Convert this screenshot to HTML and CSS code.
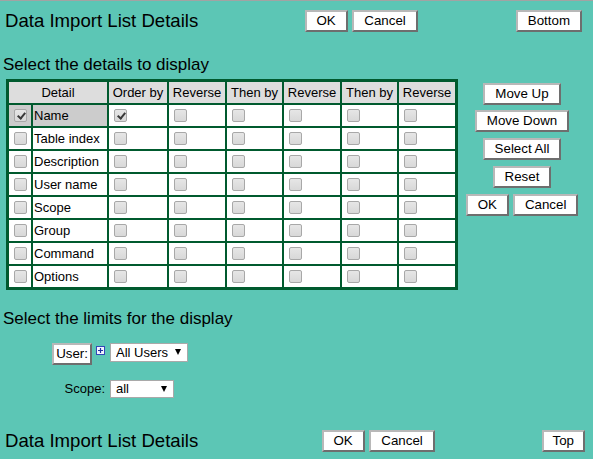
FILE: index.html
```html
<!DOCTYPE html>
<html>
<head>
<meta charset="utf-8">
<title>Data Import List Details</title>
<link rel="stylesheet" href="styles.css">
</head>
<body>
<div class="bar bar-top">
  <div class="title title-top">Data Import List Details</div>
  <button class="btn">OK</button>
  <button class="btn">Cancel</button>
  <button class="btn push">Bottom</button>
</div>

<div class="heading heading-details">Select the details to display</div>

<div class="main">
  <table class="grid">
    <colgroup>
      <col class="c-chk"><col class="c-name"><col class="c-ord"><col class="c-rev"><col class="c-then"><col class="c-rev"><col class="c-then"><col class="c-rev">
    </colgroup>
    <thead>
      <tr>
        <th colspan="2">Detail</th>
        <th>Order by</th>
        <th>Reverse</th>
        <th>Then by</th>
        <th>Reverse</th>
        <th>Then by</th>
        <th>Reverse</th>
      </tr>
    </thead>
    <tbody>
      <tr class="row-selected">
        <td class="hl"><input type="checkbox" class="cb" checked></td>
        <td class="hl txt">Name</td>
        <td><input type="checkbox" class="cb" checked></td>
        <td><input type="checkbox" class="cb"></td>
        <td><input type="checkbox" class="cb"></td>
        <td><input type="checkbox" class="cb"></td>
        <td><input type="checkbox" class="cb"></td>
        <td><input type="checkbox" class="cb"></td>
      </tr>
      <tr>
        <td><input type="checkbox" class="cb"></td>
        <td class="txt">Table index</td>
        <td><input type="checkbox" class="cb"></td>
        <td><input type="checkbox" class="cb"></td>
        <td><input type="checkbox" class="cb"></td>
        <td><input type="checkbox" class="cb"></td>
        <td><input type="checkbox" class="cb"></td>
        <td><input type="checkbox" class="cb"></td>
      </tr>
      <tr>
        <td><input type="checkbox" class="cb"></td>
        <td class="txt">Description</td>
        <td><input type="checkbox" class="cb"></td>
        <td><input type="checkbox" class="cb"></td>
        <td><input type="checkbox" class="cb"></td>
        <td><input type="checkbox" class="cb"></td>
        <td><input type="checkbox" class="cb"></td>
        <td><input type="checkbox" class="cb"></td>
      </tr>
      <tr>
        <td><input type="checkbox" class="cb"></td>
        <td class="txt">User name</td>
        <td><input type="checkbox" class="cb"></td>
        <td><input type="checkbox" class="cb"></td>
        <td><input type="checkbox" class="cb"></td>
        <td><input type="checkbox" class="cb"></td>
        <td><input type="checkbox" class="cb"></td>
        <td><input type="checkbox" class="cb"></td>
      </tr>
      <tr>
        <td><input type="checkbox" class="cb"></td>
        <td class="txt">Scope</td>
        <td><input type="checkbox" class="cb"></td>
        <td><input type="checkbox" class="cb"></td>
        <td><input type="checkbox" class="cb"></td>
        <td><input type="checkbox" class="cb"></td>
        <td><input type="checkbox" class="cb"></td>
        <td><input type="checkbox" class="cb"></td>
      </tr>
      <tr>
        <td><input type="checkbox" class="cb"></td>
        <td class="txt">Group</td>
        <td><input type="checkbox" class="cb"></td>
        <td><input type="checkbox" class="cb"></td>
        <td><input type="checkbox" class="cb"></td>
        <td><input type="checkbox" class="cb"></td>
        <td><input type="checkbox" class="cb"></td>
        <td><input type="checkbox" class="cb"></td>
      </tr>
      <tr>
        <td><input type="checkbox" class="cb"></td>
        <td class="txt">Command</td>
        <td><input type="checkbox" class="cb"></td>
        <td><input type="checkbox" class="cb"></td>
        <td><input type="checkbox" class="cb"></td>
        <td><input type="checkbox" class="cb"></td>
        <td><input type="checkbox" class="cb"></td>
        <td><input type="checkbox" class="cb"></td>
      </tr>
      <tr>
        <td><input type="checkbox" class="cb"></td>
        <td class="txt">Options</td>
        <td><input type="checkbox" class="cb"></td>
        <td><input type="checkbox" class="cb"></td>
        <td><input type="checkbox" class="cb"></td>
        <td><input type="checkbox" class="cb"></td>
        <td><input type="checkbox" class="cb"></td>
        <td><input type="checkbox" class="cb"></td>
      </tr>
    </tbody>
  </table>

  <div class="side">
    <button class="btn">Move Up</button>
    <button class="btn">Move Down</button>
    <button class="btn">Select All</button>
    <button class="btn">Reset</button>
    <div class="pair">
      <button class="btn">OK</button>
      <button class="btn">Cancel</button>
    </div>
  </div>
</div>

<div class="heading heading-limits">Select the limits for the display</div>

<div class="limits">
  <div class="lcell lcell-user">
    <button class="btn btn-user">User:</button>
    <svg class="plus" width="9" height="9" viewBox="0 0 9 9" aria-hidden="true">
      <rect x="0.5" y="0.5" width="8" height="8" fill="#f4f5ff" stroke="#3346b8" stroke-width="1"/>
      <path d="M2 4.5H7M4.5 2V7" stroke="#1f30a0" stroke-width="1.2" fill="none"/>
    </svg>
  </div>
  <div class="rcell">
    <span class="ddwrap"><select class="dd dd-users"><option>All Users</option></select></span>
  </div>
  <div class="lcell lcell-scope">
    <span class="lbl">Scope:</span>
  </div>
  <div class="rcell rcell-scope">
    <span class="ddwrap"><select class="dd dd-scope"><option>all</option></select></span>
  </div>
</div>

<div class="bar bar-bottom">
  <div class="title title-bottom">Data Import List Details</div>
  <button class="btn">OK</button>
  <button class="btn">Cancel</button>
  <button class="btn push btn-top">Top</button>
</div>
</body>
</html>
```

FILE: styles.css
```css
html, body {
  margin: 0;
  padding: 0;
}
body {
  background: #5cc6b5;
  border-top: 1px solid #a3a3a3;
  font-family: "Liberation Sans", Arial, sans-serif;
  color: #000;
  height: 458px;
  overflow: hidden;
}

/* top and bottom bars */
.bar {
  display: flex;
  align-items: center;
  gap: 4.5px;
}
.bar-top {
  margin-top: 9px;
  padding-right: 11px;
}
.bar-bottom {
  margin-top: 32px;
  padding-right: 8px;
}
.title {
  font-size: 18.6px;
  line-height: 22px;
  margin-left: 5px;
  flex: none;
}
.title-top { width: 295px; }
.title-bottom { width: 312px; }

/* buttons */
.btn {
  font-family: "Liberation Sans", Arial, sans-serif;
  font-size: 13.33px;
  line-height: 16px;
  height: 22px;
  padding: 1px 10px;
  margin: 0;
  background: #fff;
  color: #000;
  border: 2px solid;
  border-color: #b8b8b8 #6e6e6e #6e6e6e #b8b8b8;
  border-radius: 0;
  flex: none;
}
.btn.push { margin-left: auto; }
.btn.btn-top { padding: 1px 9px; }
.btn.btn-user { padding: 1px 2px; }

/* headings */
.heading {
  font-size: 17px;
  line-height: 20px;
  margin-left: 3px;
}
.heading-details {
  margin-top: 23.3px;
  margin-bottom: 3.7px;
}
.heading-limits {
  margin-top: 18.8px;
}

/* main area */
.main {
  display: flex;
  align-items: flex-start;
}
.grid {
  margin-left: 6px;
  width: 452px;
  table-layout: fixed;
  border-collapse: separate;
  border-spacing: 2px;
  border: 1px solid #005a2e;
  background: #005a2e;
  font-size: 13px;
}
.c-chk { width: 22px; }
.c-name { width: 74px; }
.c-ord { width: 58px; }
.c-rev { width: 56px; }
.c-then { width: 55px; }

.grid tr { height: 21px; }
.grid th,
.grid td {
  padding: 0;
  height: 21px;
  vertical-align: middle;
  white-space: nowrap;
}
.grid th {
  background: #dddddd;
  font-weight: normal;
  text-align: center;
}
.grid td {
  background: #fff;
  text-align: left;
}
.grid td.hl {
  background: #cccccc;
}
.grid td.txt {
  text-indent: 1px;
}

/* checkboxes */
.cb {
  -webkit-appearance: none;
  appearance: none;
  display: block;
  position: relative;
  width: 13px;
  height: 13px;
  margin: 0 0 0 5px;
  border: 1px solid #a8a8a8;
  border-radius: 2px;
  background: linear-gradient(#e6e6e6, #d8d8d8);
  box-sizing: border-box;
}
.cb:checked::after {
  content: "";
  position: absolute;
  left: 3.5px;
  top: 1px;
  width: 3px;
  height: 6px;
  border-right: 2px solid #3a3a3a;
  border-bottom: 2px solid #3a3a3a;
  transform: rotate(40deg);
}

/* side buttons */
.side {
  width: 112px;
  margin-left: 8px;
  padding-top: 3.7px;
  display: flex;
  flex-direction: column;
  align-items: center;
  gap: 5.8px;
}
.pair {
  display: flex;
  gap: 4px;
}

/* limits */
.limits {
  margin-top: 14.5px;
  display: grid;
  grid-template-columns: 105px auto;
  column-gap: 5px;
  row-gap: 14.3px;
  justify-content: start;
}
.lcell {
  display: flex;
  justify-content: flex-end;
}
.lcell-user {
  align-items: flex-start;
  gap: 4px;
}
.plus {
  display: block;
  margin-top: 3px;
}
.lcell-scope,
.rcell-scope {
  align-items: center;
  display: flex;
}
.lbl {
  font-size: 13px;
  line-height: 15px;
}
.ddwrap {
  position: relative;
  display: inline-block;
  vertical-align: top;
}
.ddwrap::after {
  content: "";
  position: absolute;
  right: 7px;
  top: 6px;
  width: 0;
  height: 0;
  border-left: 3.5px solid transparent;
  border-right: 3.5px solid transparent;
  border-top: 6px solid #000;
  pointer-events: none;
}
.dd {
  -webkit-appearance: none;
  appearance: none;
  display: block;
  height: 18.4px;
  margin: 0;
  padding: 0 0 0 5px;
  border: 1px solid #a9a9a9;
  border-radius: 0;
  background: #fff;
  color: #000;
  font-family: "Liberation Sans", Arial, sans-serif;
  font-size: 13px;
  box-sizing: border-box;
}
.dd-users { width: 78px; }
.dd-scope { width: 64px; }
```
